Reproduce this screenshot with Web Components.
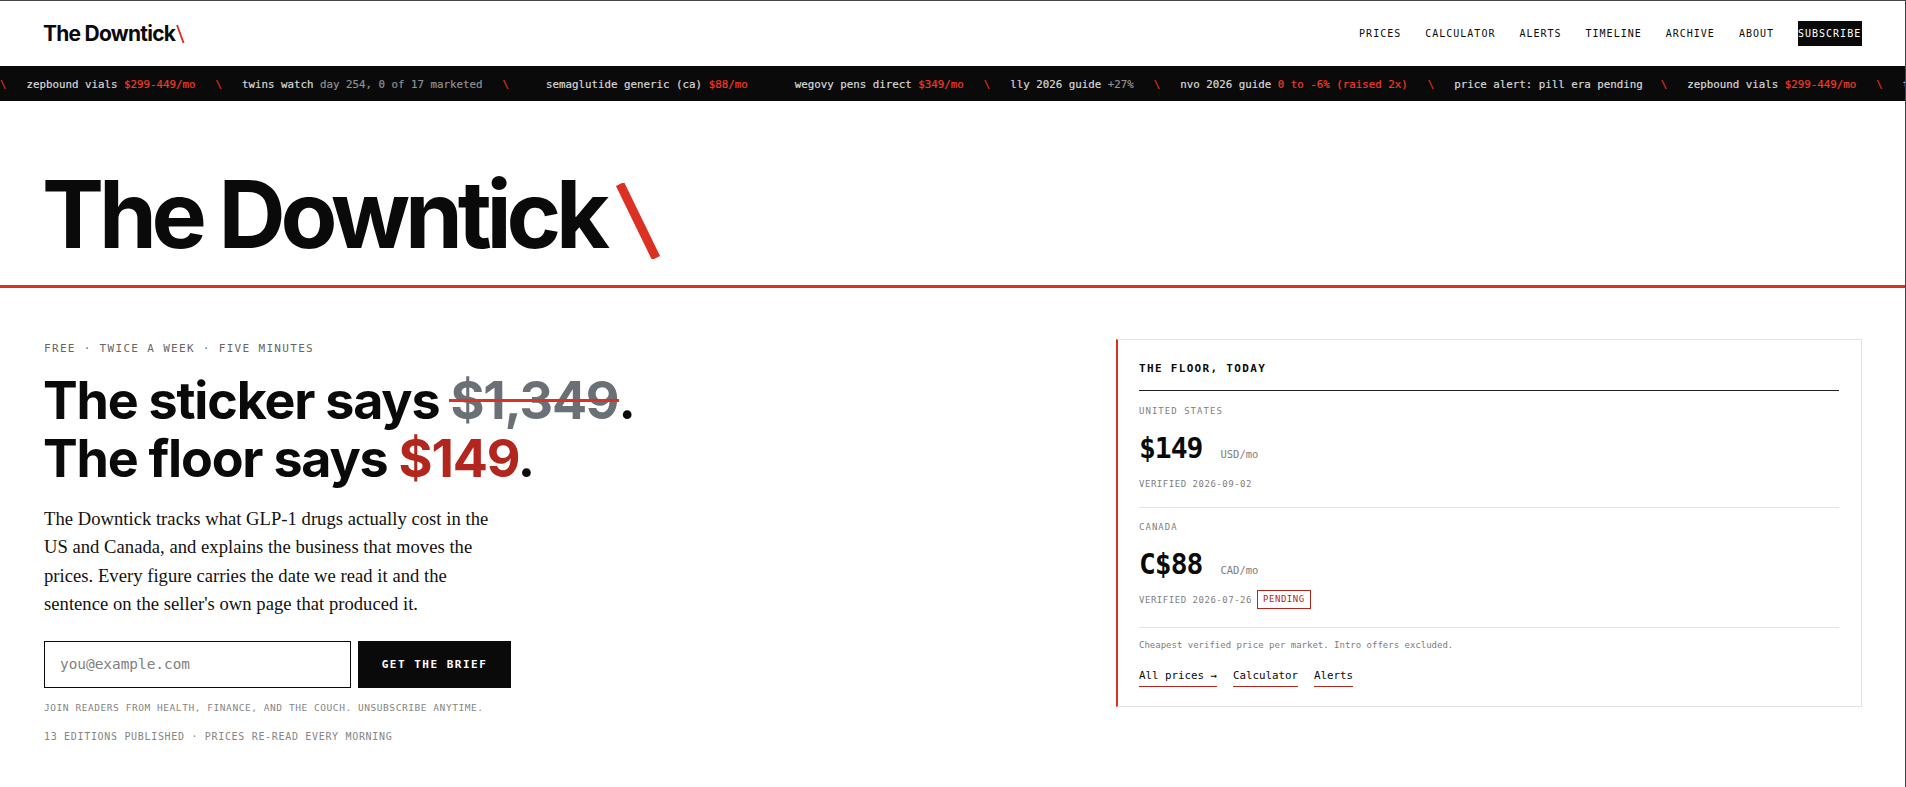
<!doctype html>
<html lang="en">
<head>
<meta charset="utf-8">
<title>The Downtick</title>
<style>
  :root {
    --ink: #0a0a0a;
    --red: #dc3022;
    --deep-red: #b3261e;
    --mono: "DejaVu Sans Mono", "Liberation Mono", monospace;
    --grotesk: Inter, "Liberation Sans", sans-serif;
    --serif: "Liberation Serif", serif;
  }
  html, body { height: 100%; }
  body {
    margin: 0;
    overflow: hidden;
    background: #fff;
    color: var(--ink);
    border-top: 1px solid #444;
    border-right: 1px solid #444;
    box-sizing: border-box;
  }
</style>
</head>
<body>
<dt-nav>
  <dt-nav-link>PRICES</dt-nav-link>
  <dt-nav-link>CALCULATOR</dt-nav-link>
  <dt-nav-link>ALERTS</dt-nav-link>
  <dt-nav-link>TIMELINE</dt-nav-link>
  <dt-nav-link>ARCHIVE</dt-nav-link>
  <dt-nav-link>ABOUT</dt-nav-link>
  <dt-nav-link cta>SUBSCRIBE</dt-nav-link>
</dt-nav>

<dt-ticker>
  <dt-tick name="zepbound vials" value="$299-449/mo" tone="red"></dt-tick>
  <dt-tick name="twins watch" value="day 254, 0 of 17 marketed" tone="dim"></dt-tick>
  <dt-tick name="semaglutide generic (ca)" value="$88/mo" tone="red" wide></dt-tick>
  <dt-tick name="wegovy pens direct" value="$349/mo" tone="red" plain></dt-tick>
  <dt-tick name="lly 2026 guide" value="+27%" tone="dim"></dt-tick>
  <dt-tick name="nvo 2026 guide" value="0 to -6% (raised 2x)" tone="red"></dt-tick>
  <dt-tick name="price alert: pill era pending"></dt-tick>
  <dt-tick name="zepbound vials" value="$299-449/mo" tone="red"></dt-tick>
  <dt-tick name="twins" value="" tone="dim"></dt-tick>
</dt-ticker>

<dt-masthead></dt-masthead>

<dt-hero>
  <dt-pitch slot="left"></dt-pitch>
  <dt-floor-card slot="right">
    <dt-market label="UNITED STATES" price="$149" unit="USD/mo" verified="2026-09-02"></dt-market>
    <dt-market label="CANADA" price="C$88" unit="CAD/mo" verified="2026-07-26" pending></dt-market>
  </dt-floor-card>
</dt-hero>

<script>
class DtNav extends HTMLElement {
    constructor() {
        super();
        const shadow = this.attachShadow({ mode: 'open' });
        shadow.innerHTML = `
        <style>
            :host {
                display: flex;
                justify-content: space-between;
                align-items: center;
                height: 65px;
                padding: 0 43px 0 43px;
            }
            #logo {
                font: 700 21px/1 var(--grotesk);
                letter-spacing: -0.75px;
                color: var(--ink);
                display: flex;
                align-items: center;
            }
            #logo svg { margin-left: 1px; }
            #links { display: flex; align-items: center; gap: 24px; }
        </style>
        <div id="logo">The Downtick<svg width="9" height="20" viewBox="0 0 9 20"><path d="M1 1 L7.6 19" stroke="#dc3022" stroke-width="1.9" fill="none"/></svg></div>
        <div id="links"><slot></slot></div>
        `;
    }
}

class DtNavLink extends HTMLElement {
    constructor() {
        super();
        const shadow = this.attachShadow({ mode: 'open' });
        shadow.innerHTML = `
        <style>
            :host {
                display: block;
                font: 400 10px/25px var(--mono);
                letter-spacing: 1px;
                color: var(--ink);
            }
            :host([cta]) {
                background: var(--ink);
                color: #fff;
                width: 64px;
            }
        </style>
        <slot></slot>
        `;
    }
}

class DtTicker extends HTMLElement {
    constructor() {
        super();
        const shadow = this.attachShadow({ mode: 'open' });
        shadow.innerHTML = `
        <style>
            :host {
                display: flex;
                align-items: center;
                height: 35px;
                background: var(--ink);
                overflow: hidden;
                white-space: nowrap;
                padding-top: 3px;
                box-sizing: border-box;
                font: 400 10.8px/1 var(--mono);
                -webkit-text-stroke: 0.2px;
            }
        </style>
        <slot></slot>
        `;
    }
}

class DtTick extends HTMLElement {
    constructor() {
        super();
        const shadow = this.attachShadow({ mode: 'open' });
        const value = this.getAttribute('value');
        const slash = this.hasAttribute('plain') ? '' : '<span id="slash">\\</span>';
        shadow.innerHTML = `
        <style>
            :host { display: inline-flex; flex: none; }
            :host([wide]) #name { margin-left: 17px; }
            :host([wide]) #value { margin-right: 47px; }
            #slash { color: var(--red); margin-right: 20px; }
            #name { color: #d6d6d6; }
            #value { margin-left: 6.5px; margin-right: 20px; }
            #name:last-child { margin-right: 18px; }
            .red { color: #f03a26; }
            .dim { color: #8d9096; }
        </style>
        ${slash}<span id="name">${this.getAttribute('name')}</span>${value ? `<span id="value" class="${this.getAttribute('tone')}">${value}</span>` : ''}
        `;
    }
}

class DtMasthead extends HTMLElement {
    constructor() {
        super();
        const shadow = this.attachShadow({ mode: 'open' });
        shadow.innerHTML = `
        <style>
            :host {
                display: flex;
                align-items: flex-start;
                height: 187px;
                box-sizing: border-box;
                padding: 67px 0 0 42px;
                border-bottom: 3px solid var(--red);
            }
            h1 {
                margin: 0;
                font: 700 93px/1 var(--grotesk);
                letter-spacing: -5.2px;
                color: var(--ink);
            }
            svg { margin: 15px 0 0 10px; }
        </style>
        <h1>The Downtick</h1>
        <svg width="46" height="76" viewBox="0 0 46 76"><path d="M5 1 L41 75" stroke="#dc3022" stroke-width="9" fill="none"/></svg>
        `;
    }
}

class DtHero extends HTMLElement {
    constructor() {
        super();
        const shadow = this.attachShadow({ mode: 'open' });
        shadow.innerHTML = `
        <style>
            :host {
                display: flex;
                justify-content: space-between;
                align-items: flex-start;
                padding: 51px 43px 0 43px;
            }
        </style>
        <slot name="left"></slot>
        <slot name="right"></slot>
        `;
    }
}

class DtPitch extends HTMLElement {
    constructor() {
        super();
        const shadow = this.attachShadow({ mode: 'open' });
        shadow.innerHTML = `
        <style>
            :host { display: block; width: 640px; padding-top: 3px; }
            #eyebrow {
                font: 400 11px/14px var(--mono);
                letter-spacing: 1.32px;
                color: #666;
                padding-left: 1px;
            }
            h2 {
                margin: 16px 0 0;
                font: 700 52px/57.5px var(--grotesk);
                letter-spacing: -1.2px;
                color: var(--ink);
            }
            #old { color: #6b6f76; position: relative; }
            #old::after {
                content: "";
                position: absolute;
                left: -1px;
                right: -1px;
                top: 30px;
                height: 3px;
                background: var(--red);
            }
            #floor { color: var(--deep-red); }
            p {
                margin: 18px 0 0;
                padding-left: 1px;
                width: 450px;
                font: 400 18.6px/28.4px var(--serif);
                letter-spacing: 0.03px;
                color: #111;
            }
            form { display: flex; gap: 7px; margin: 22px 0 0 1px; }
            input {
                box-sizing: border-box;
                width: 307px;
                height: 47px;
                border: 1px solid var(--ink);
                border-radius: 0;
                padding: 0 15px;
                font: 400 14.4px var(--mono);
                outline: none;
            }
            input::placeholder { color: #808080; opacity: 1; }
            button {
                width: 153px;
                height: 47px;
                border: 0;
                background: var(--ink);
                color: #fff;
                font: 700 11px var(--mono);
                letter-spacing: 1.5px;
            }
            .fine { padding-left: 1px; color: #858585; }
            #join {
                margin-top: 14px;
                font: 400 9.5px/12px var(--mono);
                letter-spacing: 0.56px;
            }
            #count {
                margin-top: 17px;
                font: 400 10px/12px var(--mono);
                letter-spacing: 0.68px;
            }
        </style>
        <div id="eyebrow">FREE · TWICE A WEEK · FIVE MINUTES</div>
        <h2>The sticker says <span id="old">$1,349</span>.<br>The floor says <span id="floor">$149</span>.</h2>
        <p>The Downtick tracks what GLP-1 drugs actually cost in the US and Canada, and explains the business that moves the prices. Every figure carries the date we read it and the sentence on the seller's own page that produced it.</p>
        <form>
            <input type="email" placeholder="you@example.com">
            <button type="button">GET THE BRIEF</button>
        </form>
        <div id="join" class="fine">JOIN READERS FROM HEALTH, FINANCE, AND THE COUCH. UNSUBSCRIBE ANYTIME.</div>
        <div id="count" class="fine">13 EDITIONS PUBLISHED · PRICES RE-READ EVERY MORNING</div>
        `;
    }
}

class DtFloorCard extends HTMLElement {
    constructor() {
        super();
        const shadow = this.attachShadow({ mode: 'open' });
        shadow.innerHTML = `
        <style>
            :host {
                display: block;
                box-sizing: border-box;
                width: 746px;
                height: 368px;
                border: 1px solid #e2e2e2;
                border-left: 2px solid var(--red);
                padding: 0 22px 0 21px;
            }
            header {
                font: 700 11px/14px var(--mono);
                letter-spacing: 1.32px;
                color: var(--ink);
                padding: 22px 0 14px;
                border-bottom: 1px solid #222;
            }
            #note {
                font: 400 9px/12px var(--mono);
                color: #7d7d7d;
                padding-top: 11px;
            }
            nav { display: flex; gap: 16px; margin-top: 18px; }
            a {
                font: 400 10.8px/14px var(--mono);
                color: var(--ink);
                text-decoration: none;
                padding-bottom: 3px;
                border-bottom: 1px solid var(--deep-red);
            }
        </style>
        <header>THE FLOOR, TODAY</header>
        <slot></slot>
        <div id="note">Cheapest verified price per market. Intro offers excluded.</div>
        <nav><a>All prices →</a><a>Calculator</a><a>Alerts</a></nav>
        `;
    }
}

class DtMarket extends HTMLElement {
    constructor() {
        super();
        const shadow = this.attachShadow({ mode: 'open' });
        const pending = this.hasAttribute('pending') ? '<span id="badge">PENDING</span>' : '';
        shadow.innerHTML = `
        <style>
            :host {
                display: block;
                height: 117px;
                box-sizing: border-box;
                padding-top: 14px;
                border-bottom: 1px solid #e2e2e2;
            }
            :host([pending]) { height: 120px; padding-top: 13px; }
            :host([pending]) #row { margin-top: 14px; }
            #label {
                font: 400 9px/12px var(--mono);
                letter-spacing: 1.03px;
                color: #808080;
            }
            #row { display: flex; align-items: baseline; gap: 18px; margin-top: 14px; }
            #price { font: 700 28px/36px var(--mono); letter-spacing: -1px; color: var(--ink); }
            #unit { font: 400 10.5px/14px var(--mono); color: #7d7d7d; }
            #verified {
                display: flex;
                align-items: center;
                gap: 5px;
                margin-top: 7px;
                height: 19px;
                font: 400 9px/12px var(--mono);
                letter-spacing: 0.53px;
                color: #808080;
            }
            #badge {
                border: 1px solid var(--deep-red);
                color: var(--deep-red);
                padding: 2px 5px;
                line-height: 13px;
            }
        </style>
        <div id="label">${this.getAttribute('label')}</div>
        <div id="row"><span id="price">${this.getAttribute('price')}</span><span id="unit">${this.getAttribute('unit')}</span></div>
        <div id="verified"><span>VERIFIED ${this.getAttribute('verified')}</span>${pending}</div>
        `;
    }
}

customElements.define('dt-nav', DtNav);
customElements.define('dt-nav-link', DtNavLink);
customElements.define('dt-ticker', DtTicker);
customElements.define('dt-tick', DtTick);
customElements.define('dt-masthead', DtMasthead);
customElements.define('dt-hero', DtHero);
customElements.define('dt-pitch', DtPitch);
customElements.define('dt-floor-card', DtFloorCard);
customElements.define('dt-market', DtMarket);
</script>
</body>
</html>
